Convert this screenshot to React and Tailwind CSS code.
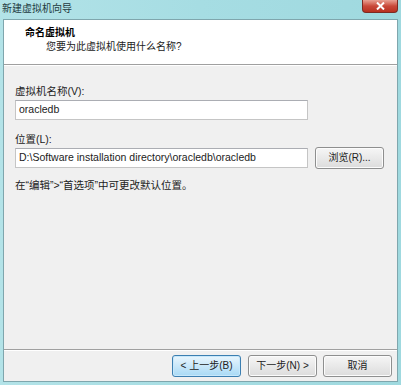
import React from 'react';

const font = { fontFamily: '"Liberation Sans", "Noto Sans CJK SC", sans-serif' };

const Button = ({ children, focused, className = '' }) => (
  <button
    className={`h-[22px] w-[69px] rounded-[3px] border text-[10px] leading-none text-[#222] flex items-center justify-center ${
      focused
        ? 'border-[#3c7fb1] bg-gradient-to-b from-[#eaf6fd] to-[#a7d9f5] shadow-[inset_0_0_0_1px_#c8e8fb]'
        : 'border-[#8e8f8f] bg-gradient-to-b from-[#f6f6f6] to-[#dcdcdc] shadow-[inset_0_0_0_1px_#fcfcfc]'
    } ${className}`}
  >
    {children}
  </button>
);

const App = () => {
  return (
    <div className="w-[401px] h-[385px] bg-gradient-to-r from-[#b3e3e8] via-[#a6dde3] to-[#9fd9df] flex flex-col overflow-hidden" style={font}>
      {/* title bar */}
      <div className="h-[19px] flex items-start justify-between pl-[2px] pr-[3px]">
        <span className="text-[10px] leading-[18px] text-[#1e3a40]">新建虚拟机向导</span>
        <div className="w-[36px] h-[13px] rounded-b-[4px] border border-t-0 border-[#7d2a22] bg-gradient-to-b from-[#e8a093] via-[#c9493a] to-[#b8301f] flex items-center justify-center">
          <svg width="9" height="8" viewBox="0 0 9 8">
            <path d="M1 0.5 L8 7.5 M8 0.5 L1 7.5" stroke="#fff" strokeWidth="2" />
          </svg>
        </div>
      </div>

      {/* client area */}
      <div className="flex-1 mx-[3px] mb-[3px] border border-[#7fa6ad] bg-[#f0f0f0] flex flex-col">
        <div className="h-[45px] bg-white border-b border-[#a0a0a0] shadow-[0_1px_0_#ffffff] flex flex-col pl-[21px] pt-[6px]">
          <span className="text-[10px] font-bold leading-[14px] text-black">命名虚拟机</span>
          <span className="text-[10px] leading-[14px] text-[#222] pl-[21px]">您要为此虚拟机使用什么名称?</span>
        </div>

        <div className="flex-1 px-[11px] pt-[19px]">
          <div className="text-[10.5px] leading-[14px] text-[#222]">虚拟机名称(V):</div>
          <div className="mt-[2px] w-[293px] h-[20px] bg-white border border-[#c5c5c5] border-t-[#abadb3] px-[3px] flex items-center text-[10.5px] text-[#222]">
            oracledb
          </div>

          <div className="mt-[12px] text-[10.5px] leading-[14px] text-[#222]">位置(L):</div>
          <div className="mt-[1px] flex items-center gap-[7px]">
            <div className="w-[293px] h-[20px] bg-white border border-[#c5c5c5] border-t-[#abadb3] px-[3px] flex items-center text-[10.5px] text-[#222] whitespace-nowrap overflow-hidden">
              D:\Software installation directory\oracledb\oracledb
            </div>
            <Button>浏览(R)...</Button>
          </div>

          <div className="mt-[9px] text-[10.5px] leading-[14px] text-[#222]">在“编辑”&gt;“首选项”中可更改默认位置。</div>
        </div>

        <div className="h-[32px] border-t border-[#a0a0a0] shadow-[inset_0_1px_0_#ffffff] flex items-center justify-end pr-[5px]">
          <Button focused>&lt; 上一步(B)</Button>
          <Button className="ml-[7px]">下一步(N) &gt;</Button>
          <Button className="ml-[6px]">取消</Button>
        </div>
      </div>
    </div>
  );
};

export default App;
